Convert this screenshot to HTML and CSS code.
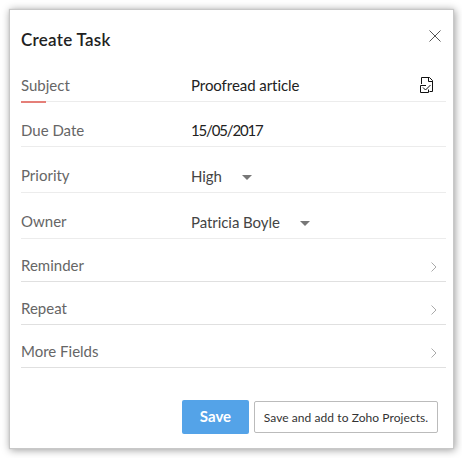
FILE: index.html
```html
<!DOCTYPE html>
<html lang="en">
<head>
    <meta charset="UTF-8">
    <meta name="viewport" content="width=device-width, initial-scale=1.0">
    <title>Create Task</title>
    <link rel="stylesheet" href="styles.css">
</head>
<body>
    <div class="dialog">
        <div class="header">
            <h1 class="title">Create Task</h1>
            <svg class="close" width="12" height="12" viewBox="0 0 12 12">
                <path d="M0.5 0.5L11.5 11.5M11.5 0.5L0.5 11.5" />
            </svg>
        </div>
        <div class="row required">
            <span class="label">Subject</span>
            <span class="value">Proofread article</span>
            <svg class="template" width="14" height="17" viewBox="0 0 14 17">
                <path d="M1.5 7V0.5H9.5L12.5 3.5V14.5H9.5M8.5 0.5V4.5H12.5" />
                <path d="M6 8.5H0.5V15.5H8.5V12.5M3 10.5L5.5 13L10.5 8" />
            </svg>
        </div>
        <div class="row date">
            <span class="label">Due Date</span>
            <span class="value day">15/05/2017</span>
        </div>
        <div class="row select">
            <span class="label">Priority</span>
            <span class="value">High</span>
            <span class="arrow"></span>
        </div>
        <div class="row select">
            <span class="label">Owner</span>
            <span class="value">Patricia Boyle</span>
            <span class="arrow"></span>
        </div>
        <div class="row more">
            <span class="label">Reminder</span>
            <svg class="chevron" width="6" height="10" viewBox="0 0 6 10"><path d="M0.5 0.5L5 5L0.5 9.5" /></svg>
        </div>
        <div class="row more">
            <span class="label">Repeat</span>
            <svg class="chevron" width="6" height="10" viewBox="0 0 6 10"><path d="M0.5 0.5L5 5L0.5 9.5" /></svg>
        </div>
        <div class="row more">
            <span class="label">More Fields</span>
            <svg class="chevron" width="6" height="10" viewBox="0 0 6 10"><path d="M0.5 0.5L5 5L0.5 9.5" /></svg>
        </div>
        <div class="footer">
            <button class="button save">Save</button>
            <button class="button add">Save and add to Zoho Projects.</button>
        </div>
    </div>
</body>
</html>
```
FILE: styles.css
```css
* {
    padding: 0;
    margin: 0;
    box-sizing: border-box;
}

body {
    background-color: white;
    font-family: Lato, "Liberation Sans", sans-serif;
    font-size: 15px;
    padding: 10px;
}
.dialog {
    width: 443px;
    height: 438px;
    padding: 0 7px 0 11px;
    background-color: white;
    box-shadow: 0 0 1px 1px #c8c8c8, 1px 1px 8px 1px rgba(0, 0, 0, 0.4);
}
.header {
    display: flex;
    justify-content: space-between;
    height: 46px;
    padding: 20px 5px 0 0;
}
.title {
    font-size: 17px;
    font-weight: 600;
    line-height: 20px;
    letter-spacing: 0.27px;
    color: #222;
}
.close {
    fill: none;
    stroke: #555;
}
.row {
    display: flex;
    align-items: flex-end;
    height: 46px;
    border-bottom: 1px solid #ececec;
    padding-bottom: 6px;
    line-height: 20px;
}
.date {
    height: 45px;
}
.label {
    width: 170px;
    color: #666;
    white-space: nowrap;
}
.value {
    color: #222;
    letter-spacing: -0.06px;
    white-space: nowrap;
}
.day {
    letter-spacing: -1.15px;
}
.required {
    position: relative;
}
.required::after {
    content: "";
    position: absolute;
    left: 0;
    bottom: -2px;
    width: 25px;
    height: 2px;
    background-color: #e57f78;
}
.template {
    margin: 0 12px 1px auto;
    fill: none;
    stroke: #111;
}
.select .label {
    padding-bottom: 1px;
}
.select .value {
    color: #444;
}
.arrow {
    margin: 0 0 6px 20px;
    border: 5px solid transparent;
    border-top-color: #777;
    border-bottom: 0;
}
.more {
    height: 43px;
    border-bottom-color: #e0e0e0;
}
.chevron {
    margin: 0 9px 3px auto;
    fill: none;
    stroke: #aaa;
}
.footer {
    display: flex;
    justify-content: flex-end;
    align-items: center;
    padding: 32px 8px 0 0;
    gap: 5px;
}
.button {
    font-family: inherit;
    border-radius: 2px;
    white-space: nowrap;
}
.save {
    width: 67px;
    height: 34px;
    border: none;
    padding-bottom: 2px;
    background-color: #54a3e8;
    color: white;
    font-size: 15px;
    font-weight: bold;
}
.add {
    width: 184px;
    height: 32px;
    border: 1px solid #bbb;
    background-color: white;
    color: #333;
    font-size: 12px;
    letter-spacing: 0.07px;
}
```
